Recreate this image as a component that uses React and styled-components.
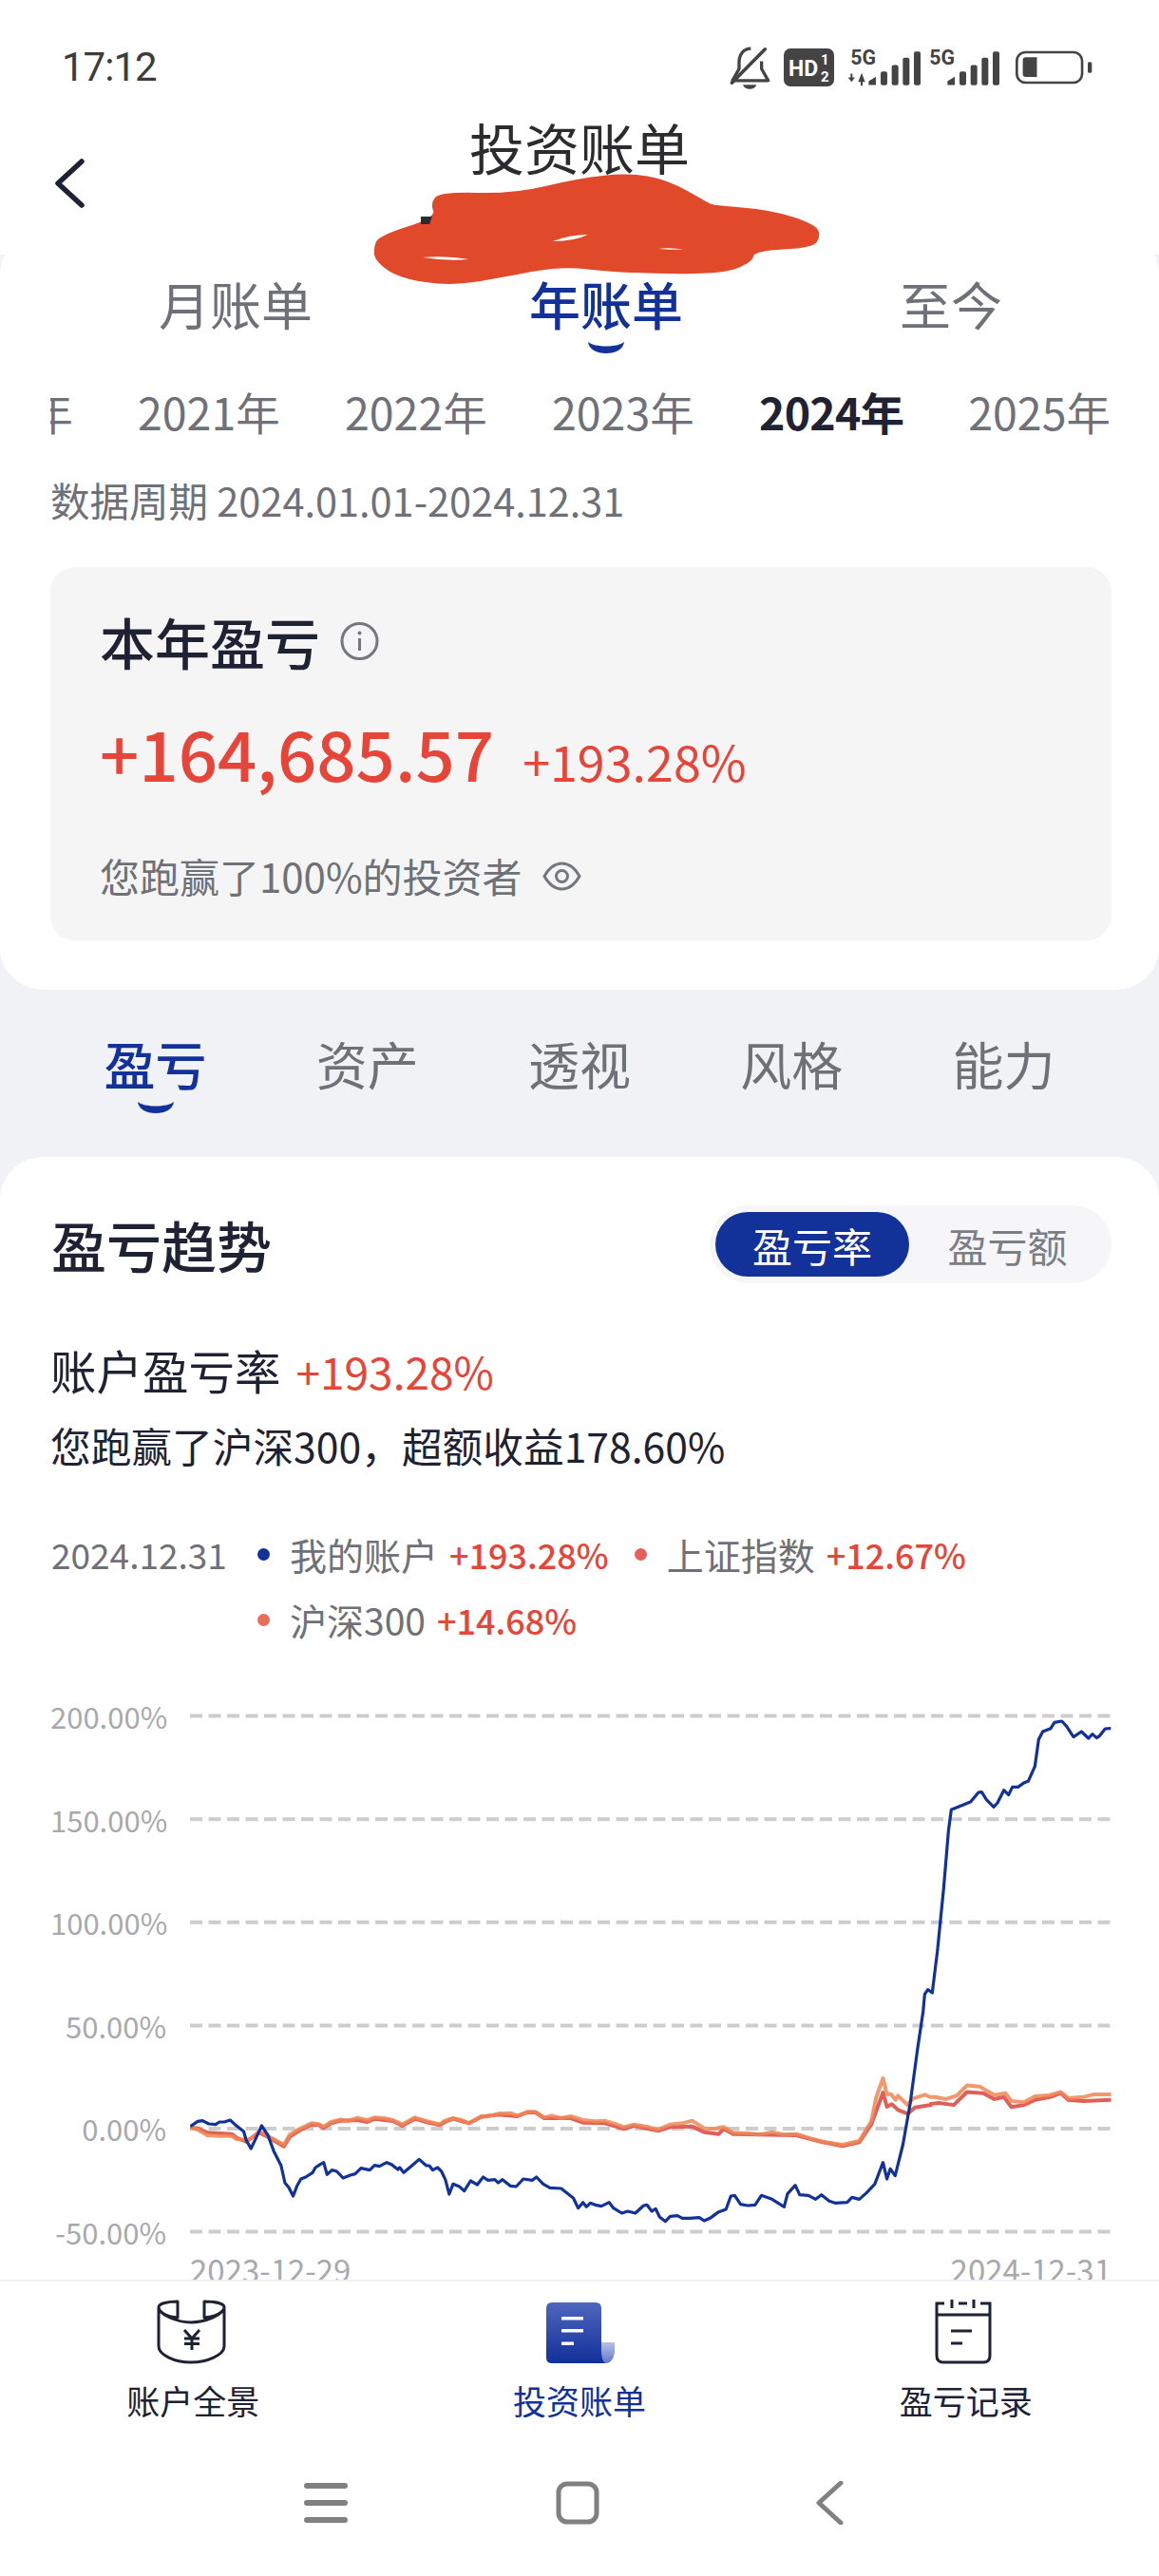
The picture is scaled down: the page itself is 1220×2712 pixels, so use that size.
import React from "react";
import styled, { createGlobalStyle } from "styled-components";

const BLUE = "#12329a";
const RED = "#e64639";
const INK = "#1e2233";
const GREY = "#6f7179";

const Global = createGlobalStyle`
  html, body {
    margin: 0;
    padding: 0;
    background: #fff;
  }
  body {
    font-family: "Noto Sans CJK SC", "Noto Sans", sans-serif;
  }
`;

const Page = styled.div`
  position: relative;
  width: 1220px;
  height: 2712px;
  display: flex;
  flex-direction: column;
  overflow: hidden;
  background: #f0f2f6;
`;

const Scroll = styled.main`
  flex: 1;
  min-height: 0;
  overflow: hidden;
`;

const Header = styled.header`
  height: 268px;
  background: #fff;
`;

const StatusBar = styled.div`
  display: flex;
  align-items: center;
  justify-content: space-between;
  height: 40px;
  padding: 51px 68px 0 65px;
`;

const Time = styled.span`
  font-family: "Roboto", sans-serif;
  font-size: 42px;
  line-height: 40px;
  color: #3c3c3c;
  letter-spacing: -1px;
`;

const StatusIcons = styled.div`
  display: flex;
  align-items: center;
  gap: 13px;
`;

const Signals = styled.div`
  display: flex;
  gap: 3px;
`;

const TitleBar = styled.div`
  display: grid;
  grid-template-columns: 1fr auto 1fr;
`;

const BackIcon = styled.svg`
  margin: 76px 0 0 57px;
`;

const Title = styled.h1`
  margin: 28px 0 0;
  font-size: 58px;
  line-height: 70px;
  font-weight: 400;
  color: #2c2c2e;
`;

const Scribble = styled.svg`
  position: absolute;
  top: 0;
  left: 0;
  pointer-events: none;
`;

const SummarySheet = styled.section`
  background: #fff;
  padding: 20px 0 52px;
  border-radius: 7px 7px 46px 46px / 22px 22px 44px 44px;
`;

const PeriodTabs = styled.nav`
  display: flex;
  align-items: flex-start;
  gap: 228px;
  padding-left: 167px;
`;

const TabItem = styled.div`
  display: flex;
  flex-direction: column;
  align-items: center;
  gap: 7px;
  font-size: 54px;
  line-height: 64px;
  font-weight: ${(p) => (p.$active ? 500 : 400)};
  color: ${(p) => (p.$active ? BLUE : GREY)};
`;

const Years = styled.div`
  margin: 31px 52px 0 53px;
  overflow: hidden;
`;

const YearTrack = styled.div`
  display: flex;
  gap: 68px;
  margin-left: -126px;
  white-space: nowrap;
`;

const Year = styled.span`
  flex: 0 0 150px;
  font-size: 46.5px;
  line-height: 60px;
  letter-spacing: ${(p) => (p.$active ? "-0.8px" : 0)};
  font-weight: ${(p) => (p.$active ? 700 : 400)};
  color: ${(p) => (p.$active ? INK : GREY)};
`;

const Period = styled.div`
  margin: 35px 0 0 53px;
  font-size: 41.5px;
  line-height: 56px;
  color: ${GREY};
`;

const SummaryCard = styled.div`
  margin: 43px 50px 0 53px;
  height: 343px;
  padding: 50px 52px 0;
  background: #f5f5f6;
  border-radius: 26px;
`;

const CardTitle = styled.div`
  display: flex;
  align-items: center;
  gap: 21px;
  font-size: 58px;
  line-height: 56px;
  font-weight: 500;
  color: ${INK};
`;

const Amounts = styled.div`
  display: flex;
  align-items: baseline;
  gap: 30px;
  margin-top: 44px;
  line-height: 90px;
  color: ${RED};
`;

const BigAmount = styled.span`
  font-size: 72.5px;
  font-weight: 500;
`;

const BigRate = styled.span`
  font-size: 52px;
`;

const Note = styled.div`
  display: flex;
  align-items: center;
  gap: 21px;
  margin-top: 48px;
  font-size: 42px;
  line-height: 56px;
  color: ${GREY};
`;

const SectionTabs = styled.nav`
  display: grid;
  grid-template-columns: repeat(5, 1fr);
  margin-top: 46px;
  padding: 0 52px;
`;

const TrendCard = styled.section`
  margin-top: 46px;
  padding-top: 51px;
  background: #fff;
  border-radius: 46px 46px 0 0 / 44px 44px 0 0;
`;

const TrendHead = styled.div`
  display: flex;
  align-items: center;
  justify-content: space-between;
  padding: 0 50px 0 54px;
`;

const TrendTitle = styled.h2`
  margin: 0;
  font-size: 58px;
  line-height: 70px;
  font-weight: 500;
  color: ${INK};
`;

const Segment = styled.div`
  display: flex;
  box-sizing: border-box;
  width: 423px;
  height: 82px;
  padding: 7px 6px;
  background: #f6f6f8;
  border-radius: 41px;
`;

const SegmentItem = styled.div`
  flex: ${(p) => (p.$active ? "0 0 204px" : 1)};
  display: flex;
  align-items: center;
  justify-content: center;
  font-size: 42px;
  color: ${(p) => (p.$active ? "#fff" : "#7c7e85")};
  background: ${(p) => (p.$active ? BLUE : "transparent")};
  border-radius: 35px;
`;

const RateLine = styled.div`
  display: flex;
  align-items: baseline;
  gap: 16px;
  margin: 61px 0 0 53px;
  line-height: 60px;
  font-size: 48.5px;
  color: ${INK};
`;

const RateValue = styled.span`
  font-size: 46px;
  color: ${RED};
`;

const BeatLine = styled.div`
  margin: 20px 0 0 53px;
  font-size: 42.7px;
  line-height: 56px;
  color: ${INK};
`;

const Legend = styled.div`
  display: grid;
  grid-template-columns: 217px 1fr;
  margin: 62px 50px 0 54px;
`;

const LegendDate = styled.span`
  font-size: 37px;
  line-height: 50px;
  color: ${GREY};
`;

const LegendEntries = styled.div`
  display: flex;
  flex-wrap: wrap;
  gap: 19px 27px;
`;

const LegendEntry = styled.div`
  display: flex;
  align-items: center;
  font-size: 39px;
  line-height: 50px;
  color: ${GREY};
`;

const Dot = styled.i`
  width: 13px;
  height: 13px;
  margin-right: 21px;
  border-radius: 50%;
  background: ${(p) => p.$color};
`;

const LegendValue = styled.b`
  margin-left: 12px;
  font-size: 36px;
  font-weight: 500;
  color: ${RED};
`;

const Chart = styled.div`
  display: flex;
  gap: 25px;
  margin: 58px 50px 0 53px;
`;

const AxisLabels = styled.div`
  display: flex;
  flex-direction: column;
  justify-content: space-between;
  width: 122px;
  height: 580px;
`;

const AxisLabel = styled.span`
  height: 37.2px;
  font-size: 31px;
  line-height: 37.2px;
  text-align: right;
  white-space: nowrap;
  color: #a8a9ae;
`;

const Dates = styled.div`
  display: flex;
  justify-content: space-between;
  margin: -1px 50px 0 200px;
  font-size: 33px;
  line-height: 44px;
  color: #a8a9ae;
`;

const BottomBar = styled.footer`
  flex: none;
  height: 310px;
  background: #fff;
  border-top: 2px solid #f0f0f2;
`;

const NavTabs = styled.div`
  display: grid;
  grid-template-columns: repeat(3, 1fr);
  padding-top: 10px;
`;

const NavTab = styled.div`
  display: flex;
  flex-direction: column;
  align-items: center;
  gap: 7px;
  font-size: 35px;
  line-height: 46px;
  color: ${(p) => (p.$active ? BLUE : INK)};
`;

const SystemKeys = styled.div`
  display: grid;
  grid-template-columns: repeat(3, 265px);
  justify-content: center;
  justify-items: center;
  margin-top: 62px;
  padding-right: 5px;
`;

const closedSmooth = (pts) => {
  const mid = (a, b) => [(a[0] + b[0]) / 2, (a[1] + b[1]) / 2];
  const start = mid(pts[pts.length - 1], pts[0]);
  let d = `M${start[0]} ${start[1]}`;
  pts.forEach((p, i) => {
    const m = mid(p, pts[(i + 1) % pts.length]);
    d += ` Q${p[0]} ${p[1]} ${m[0]} ${m[1]}`;
  });
  return d + " Z";
};

const SCRIBBLE = [
  [393, 261], [399, 248], [459, 229], [453, 214], [463, 202], [541, 204], [607, 188],
  [661, 182], [702, 189], [745, 213], [750, 216], [812, 221], [858, 236], [864, 248],
  [856, 261], [794, 264], [792, 276], [759, 289], [646, 287], [591, 280], [529, 292],
  [475, 301], [420, 293], [395, 275],
];

// points read off the picture, in screen pixels relative to the plot
const low = (pts) => pts.map(([x, y]) => `${180 + x / 1.96 - 200},${2160 + y / 3 - 1790}`).join(" ");
const high = (pts) => pts.map(([x, y]) => `${820 + x / 3 - 200},${1780 + y / 3 - 1790}`).join(" ");
const wide = (pts) => pts.map(([x, y]) => `${x / 1.285 - 200},${1760 + y / 2.412 - 1790}`).join(" ");

const BLUE_LOW = [
  [40,242],[55,226],[65,224],[78,234],[92,236],[100,228],[110,228],[122,222],[132,236],[150,258],[155,285],[165,312],[175,280],[187,240],[200,270],[212,320],[227,365],[235,420],[243,435],[252,462],[260,430],[268,408],[278,402],[292,388],[298,372],[308,362],[315,356],[322,394],[332,380],[342,384],[355,405],[370,396],[380,392],[392,374],[410,380],[420,365],[430,368],[445,356],[455,362],[468,378],[472,372],[480,388],[497,366],[512,346],[527,366],[533,366],[540,380],[550,372],[558,384],[566,410],[574,456],[582,424],[595,432],[605,446],[618,414],[632,426],[644,402],[654,412],[668,410],[675,420],[684,410],[700,430],[712,432],[727,408],[745,412],[754,402],[768,424],[782,436],[805,438],[818,454],[830,468],[840,500],[850,482],[857,496],[865,484],[875,490],[888,494],[904,482],[913,500],[930,516],[942,510],[958,516],[975,492],[982,490],[992,510],[1000,502],[1008,528],[1020,542],[1030,526],[1045,524],[1055,532],[1070,532],[1090,530],[1100,540],[1112,532],[1130,512],[1145,504],[1155,462],[1163,460],[1175,488],[1190,492],[1205,490],[1218,460],[1240,472],[1265,496],[1272,455],[1288,428],[1297,458],[1315,460],[1330,472],[1342,458],[1358,478],[1370,484],[1395,482],[1405,466],[1420,472],[1435,452],[1452,424],[1469,356],[1477,408],[1484,376],[1494,398],[1510,300],[1525,170],[1540,0],
];

const BLUE_HIGH = [
  [455,1020],[460,965],[470,950],[484,960],[500,830],[520,630],[535,450],[544,382],[605,357],[630,327],[640,326],[655,350],[678,373],[690,360],[710,320],[725,335],[737,310],[755,310],[775,296],[787,292],[808,245],[820,160],[833,135],[858,125],[870,106],[893,102],[908,118],[930,152],[955,135],[977,156],[990,143],[1003,155],[1013,148],[1030,126],[1048,125],
];

const ORANGE_LOW = [
  [40,245],[55,252],[75,270],[100,272],[125,272],[135,282],[155,285],[165,280],[182,258],[200,272],[215,285],[233,300],[245,268],[265,250],[290,232],[305,235],[315,243],[330,228],[350,220],[365,225],[385,215],[405,222],[420,214],[440,216],[458,222],[477,236],[503,214],[530,226],[555,235],[565,224],[582,216],[600,222],[615,232],[640,210],[660,208],[675,202],[700,200],[715,208],[735,196],[752,196],[770,214],[785,208],[805,216],[825,210],[850,222],[875,226],[895,224],[920,236],[935,244],[955,236],[985,244],[1005,252],[1030,236],[1055,232],[1075,224],[1100,248],[1120,250],[1140,244],[1160,262],[1190,264],[1215,268],[1240,260],[1265,268],[1290,266],[1320,280],[1345,290],[1385,300],[1420,288],[1445,225],[1455,150],[1469,90],[1477,140],[1485,140],[1495,158],[1500,145],[1520,175],[1530,155],[1555,142],[1568,150],
];

const ORANGE_WIDE = [
  [1259,1085],[1265,1085],[1280,1090],[1295,1080],[1308,1055],[1325,1058],[1345,1080],[1360,1075],[1368,1095],[1385,1098],[1400,1083],[1420,1080],[1435,1072],[1445,1088],[1465,1085],[1480,1078],[1503,1078],
];

const RED_LOW = [
  [40,245],[55,248],[75,262],[125,266],[135,278],[155,290],[182,262],[200,275],[233,305],[245,275],[265,255],[290,236],[305,238],[315,247],[330,232],[350,224],[385,222],[405,228],[420,218],[458,225],[477,240],[503,218],[530,230],[555,238],[565,228],[582,218],[615,232],[640,212],[675,205],[715,210],[735,198],[752,198],[770,216],[825,216],[850,230],[895,232],[935,250],[955,240],[1005,256],[1030,244],[1075,242],[1100,260],[1130,266],[1140,250],[1160,266],[1290,270],[1345,292],[1385,304],[1420,292],[1445,235],[1469,135],[1477,180],[1487,172],[1500,190],[1520,202],[1535,182],[1568,174],
];

const RED_WIDE = [
  [1259,1102],[1270,1100],[1290,1105],[1308,1072],[1330,1075],[1345,1090],[1358,1085],[1368,1110],[1385,1105],[1400,1092],[1420,1085],[1435,1075],[1445,1092],[1465,1095],[1503,1092],
];

const AXIS = ["200.00%", "150.00%", "100.00%", "50.00%", "0.00%", "-50.00%"];

const Smile = () => (
  <svg width="40" height="13" viewBox="0 0 40 13">
    <path d="M1 1 C8 7 32 7 39 1 C38 9 30 13 20 13 C10 13 2 9 1 1 Z" fill={BLUE} />
  </svg>
);

const Bell = () => (
  <svg width="45" height="47" viewBox="80 55 135 140">
    <path d="M150 64 C126 64 113 84 113 108 V128 L92 165 H205 L184 128 V104" fill="none" stroke="#444" strokeWidth="10" strokeLinejoin="round" />
    <path d="M125 178 H168 C162 196 131 196 125 178 Z" fill="#444" />
    <path d="M90 172 L195 66" stroke="#444" strokeWidth="11" strokeLinecap="round" />
  </svg>
);

const HdBadge = () => (
  <svg width="53" height="40" viewBox="0 0 53 40">
    <rect width="53" height="40" rx="7" fill="#444" />
    <text x="5" y="29" fontFamily="Roboto, sans-serif" fontWeight="700" fontSize="23" fill="#fff">HD</text>
    <text x="39" y="17" fontFamily="Roboto, sans-serif" fontWeight="700" fontSize="15" fill="#fff">1</text>
    <text x="39" y="35" fontFamily="Roboto, sans-serif" fontWeight="700" fontSize="15" fill="#fff">2</text>
  </svg>
);

const Signal = ({ arrows }) => {
  const x0 = arrows ? 0 : 245;
  const bars = [
    [563, 135],
    [598, 115],
    [633, 92],
    [668, 72],
  ];
  return (
    <svg width="80" height="42" viewBox={`${455 + x0} 60 240 125`}>
      <text x={468 + x0} y="115" fontFamily="Roboto, sans-serif" fontWeight="700" fontSize="64" fill="#444">5G</text>
      {arrows && (
        <path d="M460 154 H468 V142 H474 V154 H482 L471 168 Z M492 168 H500 V180 H506 V168 H514 L503 140 Z" fill="#444" />
      )}
      <path d={`M${525 + x0} 178 V166 L${548 + x0} 152 V178 Z`} fill="#444" />
      {bars.map(([x, y]) => (
        <rect key={x} x={x + x0} y={y} width="21" height={179 - y} rx="6" fill="#444" />
      ))}
    </svg>
  );
};

const Battery = () => (
  <svg width="85" height="38" viewBox="980 65 255 115">
    <rect x="989" y="74" width="208" height="97" rx="28" fill="none" stroke="#444" strokeWidth="8" />
    <path d="M1018 90 H1053 V153 H1018 Q1008 153 1008 143 V100 Q1008 90 1018 90 Z" fill="#444" />
    <rect x="1215" y="105" width="13" height="35" rx="5" fill="#444" />
  </svg>
);

const InfoIcon = () => (
  <svg width="41" height="42" viewBox="0 0 41 42">
    <circle cx="20.5" cy="21" r="18.5" fill="none" stroke="#75777e" strokeWidth="3" />
    <circle cx="20.5" cy="12.5" r="2" fill="#75777e" />
    <path d="M20.5 18 V31" stroke="#75777e" strokeWidth="3" />
  </svg>
);

const EyeIcon = () => (
  <svg width="41" height="33" viewBox="0 0 41 33">
    <path d="M2 16.5 C8 6 14 3 20.5 3 C27 3 33 6 39 16.5 C33 27 27 30 20.5 30 C14 30 8 27 2 16.5 Z" fill="none" stroke="#75777e" strokeWidth="3" />
    <circle cx="20.5" cy="16.5" r="6" fill="none" stroke="#75777e" strokeWidth="3" />
  </svg>
);

const OverviewIcon = () => (
  <svg width="100" height="85" viewBox="0 0 100 85" fill="none" stroke={INK} strokeWidth="3">
    <path d="M14 17 C14 13 24 11 34 11 V28 C22 27 14 22 14 17 C14 25 34 33 48 33 C62 33 83 25 83 17 C83 22 74 27 62 28 V11 C73 11 83 13 83 17 V58 C83 67 66 75 48 75 C30 75 14 67 14 58 V17 Z" strokeLinejoin="round" />
    <path d="M41 41 L49 50 L57 41 M41 50 H57 M41 55.5 H57 M49 50 V62" />
  </svg>
);

const BillIcon = () => (
  <svg width="100" height="85" viewBox="0 0 100 85">
    <defs>
      <linearGradient id="billBody" x1="0" y1="0" x2="0" y2="1">
        <stop offset="0" stopColor="#4e66bd" />
        <stop offset="1" stopColor="#12309a" />
      </linearGradient>
      <linearGradient id="billFold" x1="0" y1="0" x2="0" y2="1">
        <stop offset="0" stopColor="#b7c2e4" />
        <stop offset="1" stopColor="#6378c6" />
      </linearGradient>
    </defs>
    <path d="M73 54 H87 V62 C87 70 83 76 78 76 C74 74 73 68 73 54 Z" fill="url(#billFold)" />
    <path d="M21 12 H67 Q73 12 73 18 V56 C73 68 74 74 78 76 H21 Q15 76 15 70 V18 Q15 12 21 12 Z" fill="url(#billBody)" />
    <rect x="31" y="27" width="23" height="3.5" fill="#fff" />
    <rect x="31" y="40" width="23" height="3.5" fill="#fff" />
    <rect x="31" y="53.5" width="13" height="3.5" fill="#fff" />
  </svg>
);

const RecordIcon = () => (
  <svg width="100" height="85" viewBox="2 0 100 85" fill="none" stroke={INK} strokeWidth="3">
    <path d="M29 13 H21 V68 Q21 75 28 75 H70 Q77 75 77 68 V13 H67 M21 25 H77 M37 9 V18 M60 9 V18 M44 13 H53 M36 42 H58 M36 55 H48" />
  </svg>
);

const App = () => (
  <Page>
    <Global />
    <Scroll>
      <Header>
        <StatusBar>
          <Time>17:12</Time>
          <StatusIcons>
            <Bell />
            <HdBadge />
            <Signals>
              <Signal arrows />
              <Signal />
            </Signals>
            <Battery />
          </StatusIcons>
        </StatusBar>
        <TitleBar>
          <BackIcon width="32" height="52" viewBox="0 0 32 52">
            <path d="M29 3 L4 26 L29 49" fill="none" stroke={INK} strokeWidth="5.5" strokeLinecap="round" strokeLinejoin="round" />
          </BackIcon>
          <Title>投资账单</Title>
        </TitleBar>
      </Header>

      <SummarySheet>
        <PeriodTabs>
          <TabItem>月账单</TabItem>
          <TabItem $active>
            年账单
            <Smile />
          </TabItem>
          <TabItem>至今</TabItem>
        </PeriodTabs>
        <Years>
          <YearTrack>
            {["2020", "2021", "2022", "2023", "2024", "2025"].map((y) => (
              <Year key={y} $active={y === "2024"}>
                {y}年
              </Year>
            ))}
          </YearTrack>
        </Years>
        <Period>数据周期 2024.01.01-2024.12.31</Period>
        <SummaryCard>
          <CardTitle>
            本年盈亏
            <InfoIcon />
          </CardTitle>
          <Amounts>
            <BigAmount>+164,685.57</BigAmount>
            <BigRate>+193.28%</BigRate>
          </Amounts>
          <Note>
            您跑赢了100%的投资者
            <EyeIcon />
          </Note>
        </SummaryCard>
      </SummarySheet>

      <SectionTabs>
        {["盈亏", "资产", "透视", "风格", "能力"].map((t, i) => (
          <TabItem key={t} $active={i === 0}>
            {t}
            {i === 0 && <Smile />}
          </TabItem>
        ))}
      </SectionTabs>

      <TrendCard>
        <TrendHead>
          <TrendTitle>盈亏趋势</TrendTitle>
          <Segment>
            <SegmentItem $active>盈亏率</SegmentItem>
            <SegmentItem>盈亏额</SegmentItem>
          </Segment>
        </TrendHead>
        <RateLine>
          账户盈亏率
          <RateValue>+193.28%</RateValue>
        </RateLine>
        <BeatLine>您跑赢了沪深300，超额收益178.60%</BeatLine>
        <Legend>
          <LegendDate>2024.12.31</LegendDate>
          <LegendEntries>
            <LegendEntry>
              <Dot $color={BLUE} />
              我的账户
              <LegendValue>+193.28%</LegendValue>
            </LegendEntry>
            <LegendEntry>
              <Dot $color="#e5605a" />
              上证指数
              <LegendValue>+12.67%</LegendValue>
            </LegendEntry>
            <LegendEntry>
              <Dot $color="#ec6c58" />
              沪深300
              <LegendValue>+14.68%</LegendValue>
            </LegendEntry>
          </LegendEntries>
        </Legend>
        <Chart>
          <AxisLabels>
            {AXIS.map((a) => (
              <AxisLabel key={a}>{a}</AxisLabel>
            ))}
          </AxisLabels>
          <svg width="970" height="580" viewBox="0 0 970 580">
            {AXIS.map((a, i) => (
              <line key={a} x1="0" x2="970" y1={18.6 + 108.6 * i} y2={18.6 + 108.6 * i} stroke="#cdcdcd" strokeWidth="4" strokeDasharray="13 6.5" />
            ))}
            <polyline points={`${low(RED_LOW)} ${wide(RED_WIDE)}`} fill="none" stroke="#e05f58" strokeWidth="4" strokeLinejoin="round" />
            <polyline points={`${low(ORANGE_LOW)} ${wide(ORANGE_WIDE)}`} fill="none" stroke="#ee8755" strokeWidth="4" strokeLinejoin="round" strokeOpacity="0.85" />
            <polyline points={`${low(BLUE_LOW)} ${high(BLUE_HIGH)}`} fill="none" stroke={BLUE} strokeWidth="3.2" strokeLinejoin="round" />
          </svg>
        </Chart>
        <Dates>
          <span>2023-12-29</span>
          <span>2024-12-31</span>
        </Dates>
      </TrendCard>
    </Scroll>

    <BottomBar>
      <NavTabs>
        <NavTab>
          <OverviewIcon />
          账户全景
        </NavTab>
        <NavTab $active>
          <BillIcon />
          投资账单
        </NavTab>
        <NavTab>
          <RecordIcon />
          盈亏记录
        </NavTab>
      </NavTabs>
      <SystemKeys>
        <svg width="46" height="46" viewBox="0 0 46 46">
          <path d="M3 5 H43 M3 23 H43 M3 41 H43" stroke="#808080" strokeWidth="6" strokeLinecap="round" />
        </svg>
        <svg width="46" height="46" viewBox="0 0 46 46">
          <rect x="3" y="3" width="40" height="40" rx="9" fill="none" stroke="#808080" strokeWidth="5" />
        </svg>
        <svg width="30" height="46" viewBox="0 0 30 46">
          <path d="M27 2 L4 23 L27 44" fill="none" stroke="#808080" strokeWidth="5" strokeLinecap="round" strokeLinejoin="round" />
        </svg>
      </SystemKeys>
    </BottomBar>

    <Scribble width="1220" height="320" viewBox="0 0 1220 320">
      <path d={closedSmooth(SCRIBBLE)} fill="#e1492b" />
      <path d="M445 271 Q470 269 494 273 Q470 275 445 271 Z M582 254 Q600 247 619 247 Q605 254 582 254 Z M693 262 Q706 260 720 263 Q706 263 693 262 Z" fill="#fff" />
      <path d="M443 228 H455 L452 236 H443 Z" fill="#2c2c2e" />
    </Scribble>
  </Page>
);

export default App;
